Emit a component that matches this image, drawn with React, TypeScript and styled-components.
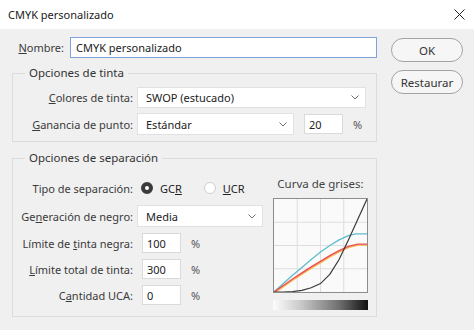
import React from 'react';
import styled, { createGlobalStyle } from 'styled-components';

const GlobalStyle = createGlobalStyle`
  html, body {
    margin: 0;
    padding: 0;
    background: #f0f0f0;
  }
  * {
    box-sizing: border-box;
  }
`;

const Window = styled.div`
  width: 474px;
  height: 330px;
  background: #f0f0f0;
  font-family: 'Noto Sans', 'Open Sans', sans-serif;
  font-size: 11px;
  color: #3a3a3a;
  overflow: hidden;
`;

const TitleBar = styled.div`
  display: flex;
  align-items: center;
  justify-content: space-between;
  height: 29px;
  padding: 0 9px 0 8px;
  background: #ffffff;
  color: #1a1a1a;
  font-size: 11px;
`;

const Body = styled.div`
  display: flex;
  padding: 8px 11px 0 12px;
`;

const MainColumn = styled.div`
  width: 365px;
`;

const ButtonColumn = styled.div`
  display: flex;
  flex-direction: column;
  gap: 8px;
  margin-left: 14px;
  padding-top: 1px;
`;

const DialogButton = styled.button`
  width: 72px;
  height: 24px;
  border: 1px solid #a3a3a3;
  border-radius: 12px;
  background: #f6f6f6;
  font-family: inherit;
  font-size: 11.5px;
  color: #333333;
  padding: 0;
`;

const NameRow = styled.div`
  display: flex;
  align-items: center;
  height: 21px;
`;

const NameLabel = styled.label`
  width: 52px;
  text-align: right;
  margin-right: 6px;
`;

const TextField = styled.div<{ $width?: number; $focused?: boolean; $offset?: number }>`
  display: flex;
  align-items: center;
  flex: ${p => (p.$width ? '0 0 auto' : '1')};
  width: ${p => (p.$width ? `${p.$width}px` : 'auto')};
  height: ${p => (p.$focused ? 21 : 20)}px;
  margin-left: ${p => p.$offset ?? 0}px;
  padding-left: ${p => (p.$focused ? 5 : 4)}px;
  background: #ffffff;
  border: 1px solid ${p => (p.$focused ? '#7ea3d6' : '#dadada')};
  color: #222222;
`;

const Frame = styled.fieldset<{ $gap: number }>`
  margin: ${p => p.$gap}px 0 0 0;
  padding: 6px 10px 6px 0;
  border: 1px solid #dcdcdc;
  min-width: 0;
`;

const Legend = styled.legend`
  margin-left: 12px;
  padding: 0 4px;
  line-height: 16px;
  font-size: 11.5px;
  color: #333333;
`;

const FormGrid = styled.div<{ $rowGap: number; $width?: number }>`
  display: grid;
  grid-template-columns: 120px 1fr;
  column-gap: 4px;
  row-gap: ${p => p.$rowGap}px;
  align-items: center;
  flex: none;
  width: ${p => (p.$width ? `${p.$width}px` : 'auto')};
`;

const RowLabel = styled.label`
  text-align: right;
  white-space: nowrap;
`;

const Controls = styled.div`
  display: flex;
  align-items: center;
`;

const SelectBox = styled.div<{ $width?: number; $height?: number }>`
  display: flex;
  align-items: center;
  justify-content: space-between;
  width: ${p => (p.$width ? `${p.$width}px` : '100%')};
  height: ${p => p.$height ?? 22}px;
  padding: 0 6px 0 8px;
  background: #ffffff;
  border: 1px solid #e1e1e1;
  color: #222222;
`;

const Percent = styled.span`
  margin-left: 10px;
  color: #555555;
`;

const SeparationBody = styled.div`
  display: flex;
  align-items: flex-start;
  padding-top: 5px;
`;

const RadioGroup = styled.div`
  display: flex;
  align-items: center;
  height: 22px;
  padding-left: 4px;
`;

const RadioOption = styled.label`
  display: flex;
  align-items: center;
  gap: 7px;
  margin-right: 22px;
  color: #222222;
`;

const RadioMark = styled.span<{ $checked: boolean }>`
  width: 12px;
  height: 12px;
  border-radius: 50%;
  background: #ffffff;
  border: ${p => (p.$checked ? '4px solid #3b3b3b' : '1px solid #cfcfcf')};
`;

const CurvePanel = styled.div`
  display: flex;
  flex-direction: column;
  align-items: center;
  margin-left: 10px;
  margin-top: -1px;
`;

const CurveTitle = styled.div`
  height: 16px;
  line-height: 16px;
  margin-bottom: 6px;
  font-size: 11.5px;
  color: #444444;
`;

const CurveBox = styled.div`
  width: 95px;
  height: 95px;
  border: 1px solid #8c8c8c;
  background: #fafafa;
`;

const GrayRamp = styled.div`
  width: 95px;
  height: 10px;
  margin-top: 7px;
  background: linear-gradient(to right, #fdfdfd 0%, #c8c8c8 30%, #6e6e6e 70%, #111111 100%);
`;

const Chevron = () => (
  <svg width="8" height="5" viewBox="0 0 8 5">
    <polyline points="0.5,0.5 4,4 7.5,0.5" fill="none" stroke="#707070" strokeWidth="1" />
  </svg>
);

const CloseIcon = () => (
  <svg width="11" height="11" viewBox="0 0 11 11">
    <path d="M0.5 0.5 L10.5 10.5 M10.5 0.5 L0.5 10.5" stroke="#222222" strokeWidth="1" />
  </svg>
);

const toPath = (pts: [number, number][]) =>
  pts.map(([x, y], i) => `${i === 0 ? 'M' : 'L'}${(x * 93).toFixed(1)} ${(93 - y * 93).toFixed(1)}`).join(' ');

const cyan: [number, number][] = [
  [0, 0], [0.1, 0.09], [0.2, 0.18], [0.3, 0.265], [0.4, 0.35], [0.5, 0.43],
  [0.6, 0.5], [0.7, 0.56], [0.8, 0.605], [0.88, 0.625], [1, 0.625],
];
const magenta: [number, number][] = [
  [0, 0], [0.1, 0.07], [0.2, 0.14], [0.3, 0.205], [0.4, 0.27], [0.5, 0.33],
  [0.6, 0.39], [0.7, 0.445], [0.8, 0.49], [0.9, 0.515], [1, 0.515],
];
const black: [number, number][] = [
  [0, 0], [0.1, 0], [0.2, 0.004], [0.3, 0.018], [0.4, 0.045], [0.5, 0.09],
  [0.6, 0.19], [0.7, 0.35], [0.8, 0.56], [0.9, 0.78], [1, 1],
];

const GrayCurve = () => (
  <svg width="93" height="93" viewBox="0 0 93 93" style={{ display: 'block' }}>
    {[0.25, 0.5, 0.75].map(f => (
      <g key={f}>
        <line x1={f * 93} y1="0" x2={f * 93} y2="93" stroke="#dedede" strokeWidth="1" />
        <line x1="0" y1={f * 93} x2="93" y2={f * 93} stroke="#dedede" strokeWidth="1" />
      </g>
    ))}
    <path d={toPath(magenta)} fill="none" stroke="#f7b94a" strokeWidth="1.4" transform="translate(0.6 1)" />
    <path d={toPath(cyan)} fill="none" stroke="#5cbccc" strokeWidth="1.3" />
    <path d={toPath(magenta)} fill="none" stroke="#ec4a55" strokeWidth="1.4" />
    <path d={toPath(black)} fill="none" stroke="#3a3a3a" strokeWidth="1.2" />
  </svg>
);

export default function App() {
  return (
    <Window>
      <GlobalStyle />
      <TitleBar>
        <span>CMYK personalizado</span>
        <CloseIcon />
      </TitleBar>
      <Body>
        <MainColumn>
          <NameRow>
            <NameLabel>
              <u>N</u>ombre:
            </NameLabel>
            <TextField $focused>CMYK personalizado</TextField>
          </NameRow>

          <Frame $gap={7}>
            <Legend>Opciones de tinta</Legend>
            <FormGrid $rowGap={5}>
              <RowLabel>
                <u>C</u>olores de tinta:
              </RowLabel>
              <SelectBox $height={21}>
                <span>SWOP (estucado)</span>
                <Chevron />
              </SelectBox>
              <RowLabel>
                <u>G</u>anancia de punto:
              </RowLabel>
              <Controls>
                <SelectBox $width={157}>
                  <span>Estándar</span>
                  <Chevron />
                </SelectBox>
                <TextField $width={39} $offset={10}>20</TextField>
                <Percent>%</Percent>
              </Controls>
            </FormGrid>
          </Frame>

          <Frame $gap={8}>
            <Legend>Opciones de separación</Legend>
            <SeparationBody>
              <FormGrid $rowGap={6} $width={250}>
                <RowLabel>Tipo de separación:</RowLabel>
                <RadioGroup>
                  <RadioOption>
                    <RadioMark $checked />
                    <span>
                      GC<u>R</u>
                    </span>
                  </RadioOption>
                  <RadioOption>
                    <RadioMark $checked={false} />
                    <span>
                      <u>U</u>CR
                    </span>
                  </RadioOption>
                </RadioGroup>
                <RowLabel>
                  Ge<u>n</u>eración de negro:
                </RowLabel>
                <SelectBox $width={126}>
                  <span>Media</span>
                  <Chevron />
                </SelectBox>
                <RowLabel>
                  Límite de <u>t</u>inta negra:
                </RowLabel>
                <Controls>
                  <TextField $width={39} $offset={5}>100</TextField>
                  <Percent>%</Percent>
                </Controls>
                <RowLabel>
                  <u>L</u>ímite total de tinta:
                </RowLabel>
                <Controls>
                  <TextField $width={39} $offset={5}>300</TextField>
                  <Percent>%</Percent>
                </Controls>
                <RowLabel>
                  C<u>a</u>ntidad UCA:
                </RowLabel>
                <Controls>
                  <TextField $width={39} $offset={5}>0</TextField>
                  <Percent>%</Percent>
                </Controls>
              </FormGrid>
              <CurvePanel>
                <CurveTitle>Curva de grises:</CurveTitle>
                <CurveBox>
                  <GrayCurve />
                </CurveBox>
                <GrayRamp />
              </CurvePanel>
            </SeparationBody>
          </Frame>
        </MainColumn>
        <ButtonColumn>
          <DialogButton>OK</DialogButton>
          <DialogButton>Restaurar</DialogButton>
        </ButtonColumn>
      </Body>
    </Window>
  );
}
